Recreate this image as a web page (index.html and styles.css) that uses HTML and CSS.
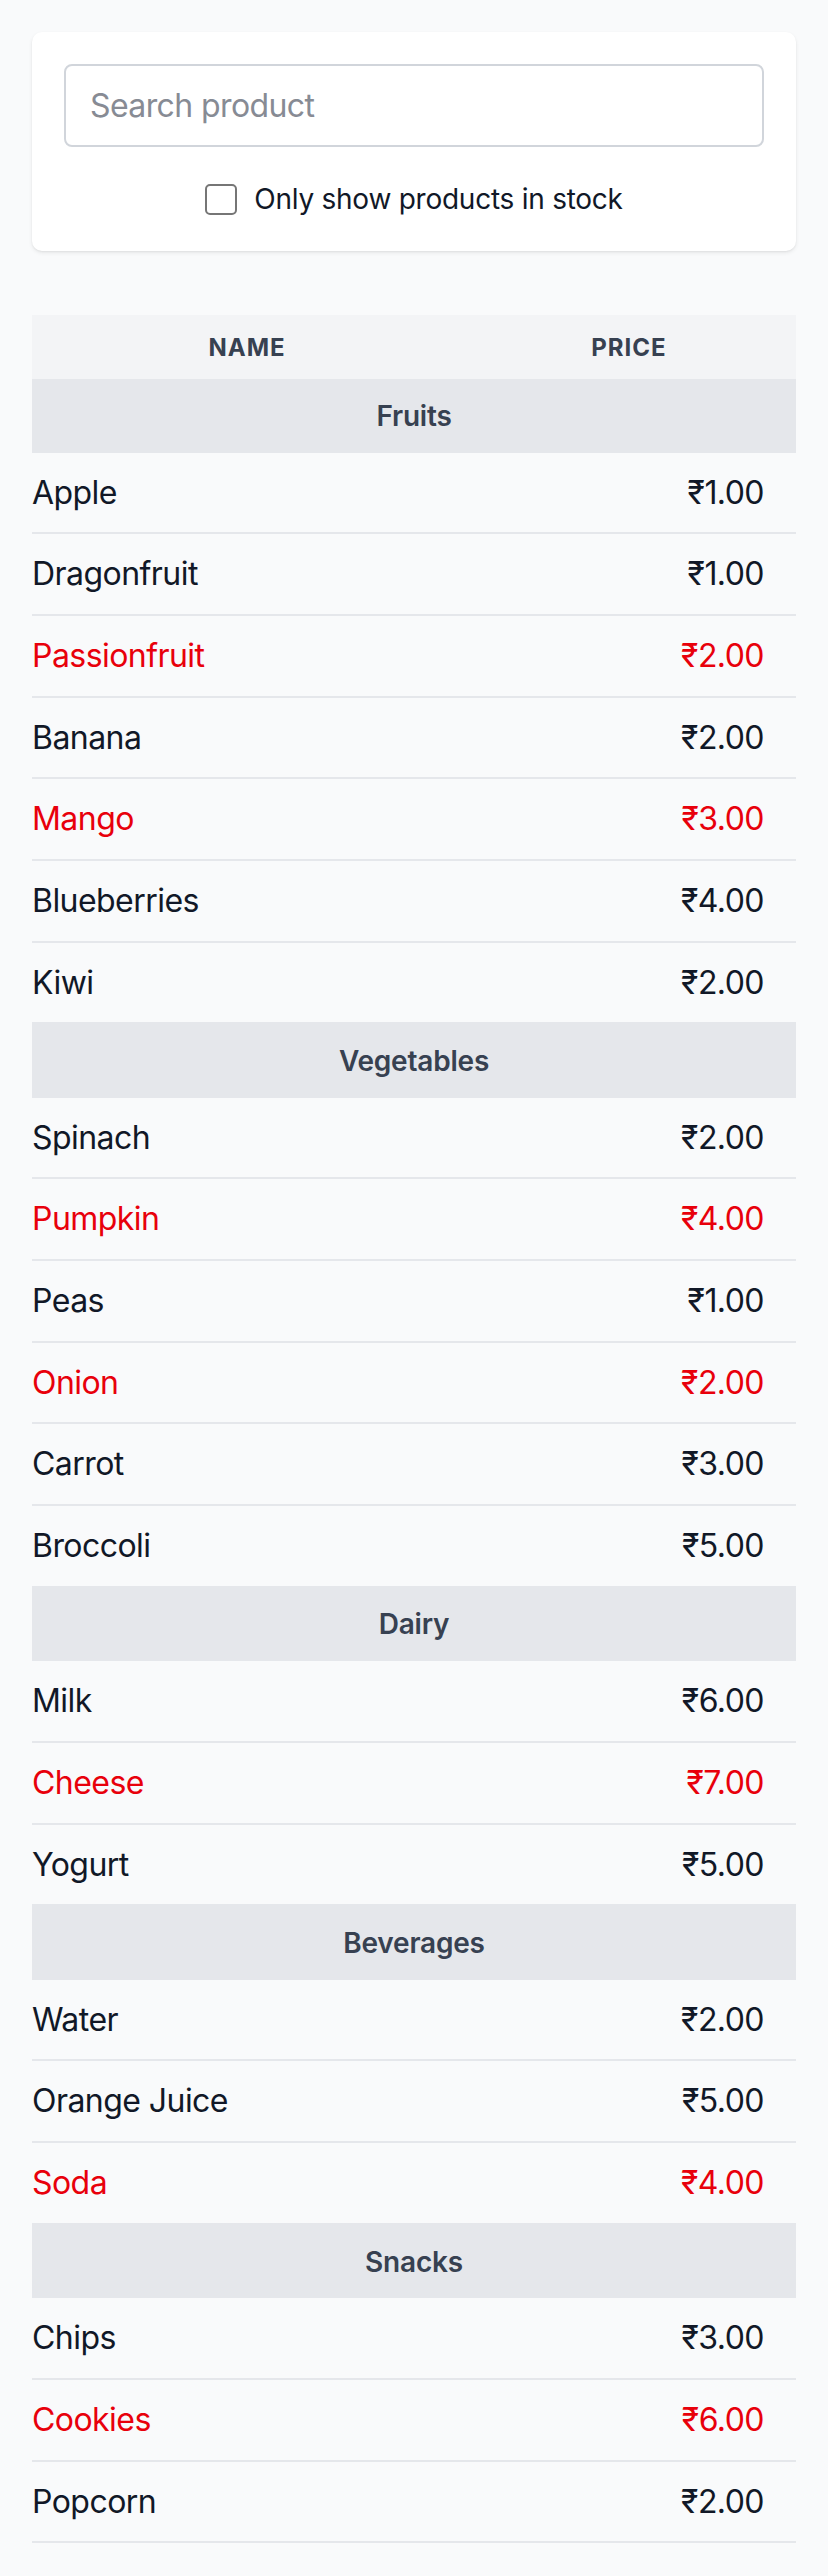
FILE: index.html
```html
<!DOCTYPE html>
<html lang="en">
<head>
<meta charset="utf-8">
<title>Products</title>
<link rel="stylesheet" href="styles.css">
</head>
<body>
<div class="card">
  <input class="search" type="text" placeholder="Search product">
  <label class="stock">
    <input class="check" type="checkbox">
    <span>Only show products in stock</span>
  </label>
</div>
<table class="products">
  <colgroup><col class="col-name"><col class="col-price"></colgroup>
  <thead>
    <tr><th>Name</th><th>Price</th></tr>
  </thead>
  <tbody>
    <tr class="category"><td colspan="2">Fruits</td></tr>
    <tr><td class="name">Apple</td><td class="price">₹1.00</td></tr>
    <tr><td class="name">Dragonfruit</td><td class="price">₹1.00</td></tr>
    <tr class="out"><td class="name">Passionfruit</td><td class="price">₹2.00</td></tr>
    <tr><td class="name">Banana</td><td class="price">₹2.00</td></tr>
    <tr class="out"><td class="name">Mango</td><td class="price">₹3.00</td></tr>
    <tr><td class="name">Blueberries</td><td class="price">₹4.00</td></tr>
    <tr><td class="name">Kiwi</td><td class="price">₹2.00</td></tr>
    <tr class="category"><td colspan="2">Vegetables</td></tr>
    <tr><td class="name">Spinach</td><td class="price">₹2.00</td></tr>
    <tr class="out"><td class="name">Pumpkin</td><td class="price">₹4.00</td></tr>
    <tr><td class="name">Peas</td><td class="price">₹1.00</td></tr>
    <tr class="out"><td class="name">Onion</td><td class="price">₹2.00</td></tr>
    <tr><td class="name">Carrot</td><td class="price">₹3.00</td></tr>
    <tr><td class="name">Broccoli</td><td class="price">₹5.00</td></tr>
    <tr class="category"><td colspan="2">Dairy</td></tr>
    <tr><td class="name">Milk</td><td class="price">₹6.00</td></tr>
    <tr class="out"><td class="name">Cheese</td><td class="price">₹7.00</td></tr>
    <tr><td class="name">Yogurt</td><td class="price">₹5.00</td></tr>
    <tr class="category"><td colspan="2">Beverages</td></tr>
    <tr><td class="name">Water</td><td class="price">₹2.00</td></tr>
    <tr><td class="name">Orange Juice</td><td class="price">₹5.00</td></tr>
    <tr class="out"><td class="name">Soda</td><td class="price">₹4.00</td></tr>
    <tr class="category"><td colspan="2">Snacks</td></tr>
    <tr><td class="name">Chips</td><td class="price">₹3.00</td></tr>
    <tr class="out"><td class="name">Cookies</td><td class="price">₹6.00</td></tr>
    <tr><td class="name">Popcorn</td><td class="price">₹2.00</td></tr>
  </tbody>
</table>
</body>
</html>
```
FILE: styles.css
```css
* { box-sizing: border-box; }

html, body {
  margin: 0;
  background: #f9fafb;
}

body {
  padding: 32px;
  font-family: Inter, "Noto Sans", "DejaVu Sans", sans-serif;
  color: #111827;
}

.card {
  background: #ffffff;
  border-radius: 10px;
  padding: 32px;
  box-shadow: 0 2px 4px rgba(0, 0, 0, 0.07), 0 1px 2px rgba(0, 0, 0, 0.05);
}

.search {
  display: block;
  width: 100%;
  height: 83px;
  margin: 0;
  padding: 0 24px;
  border: 2px solid #d1d5db;
  border-radius: 8px;
  font-family: inherit;
  font-size: 32px;
  letter-spacing: -0.6px;
  color: #111827;
  background: #ffffff;
  outline: none;
}

.search::placeholder {
  color: #878b94;
}

.stock {
  display: flex;
  align-items: center;
  justify-content: center;
  gap: 17px;
  margin-top: 32px;
  height: 40px;
  font-size: 28px;
  letter-spacing: -0.25px;
  color: #111827;
}

.check {
  appearance: none;
  -webkit-appearance: none;
  width: 32px;
  height: 31px;
  margin: 0;
  border: 2px solid #767676;
  border-radius: 5px;
  background: #ffffff;
}

.products {
  width: 100%;
  margin-top: 64px;
  border-collapse: separate;
  border-spacing: 0;
  table-layout: fixed;
}

.col-name { width: 430px; }
.col-price { width: 334px; }

.products th {
  height: 64px;
  padding: 0;
  background: #f3f4f6;
  color: #374151;
  font-size: 24px;
  font-weight: 700;
  letter-spacing: 1px;
  text-transform: uppercase;
  text-align: center;
}

.category td {
  height: 73.5px;
  padding: 0;
  background: #e5e7eb;
  color: #374151;
  font-size: 28px;
  font-weight: 600;
  letter-spacing: -0.2px;
  text-align: center;
}

.products td.name,
.products td.price {
  padding: 16px 0;
  font-size: 32px;
  line-height: 47.67px;
  letter-spacing: -0.55px;
  border-bottom: 2px solid #e5e7eb;
}

.products td.price {
  text-align: right;
  padding-right: 32px;
}

.out td {
  color: #e8000b;
}
```
